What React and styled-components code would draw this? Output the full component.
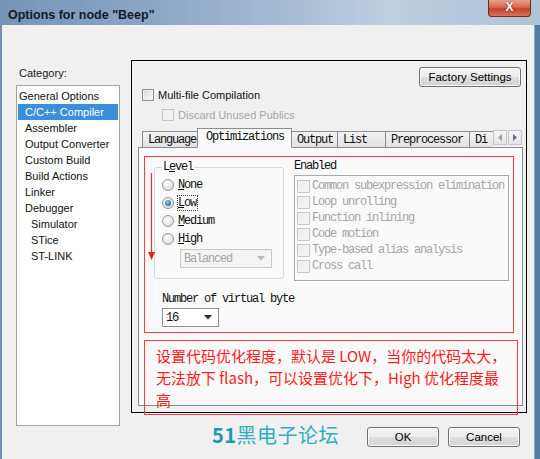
import React from 'react';
import styled, { createGlobalStyle, css } from 'styled-components';

const UI = `"Liberation Sans", Arial, sans-serif`;
const MONO = `"Liberation Mono", "Courier New", monospace`;
const CJK = `"Noto Sans CJK SC", "Noto Sans", sans-serif`;

const GlobalStyle = createGlobalStyle`
  html, body {
    margin: 0;
    padding: 0;
    background: #f0f0f0;
  }
  body {
    font-family: ${UI};
  }
`;

const Window = styled.div`
  width: 540px;
  height: 459px;
  display: flex;
  flex-direction: column;
  overflow: hidden;
  background: #f0f0f0;
`;

const TitleBar = styled.div`
  height: 25px;
  flex: none;
  display: flex;
  justify-content: space-between;
  align-items: flex-start;
  background: linear-gradient(90deg, #7794b7 0%, #8ba6c5 28%, #a5bbd4 52%, #bfcfe0 72%, #aec2d8 100%);
`;

const Title = styled.div`
  font: bold 12.5px ${UI};
  line-height: 14px;
  color: #111a26;
  padding: 8px 0 0 8px;
`;

const CloseButton = styled.div`
  width: 43px;
  height: 17px;
  margin-right: 9px;
  box-sizing: border-box;
  border: 1px solid #6e2b20;
  border-top: none;
  border-radius: 0 0 4px 4px;
  background: linear-gradient(#e9a08c 0%, #d66a50 45%, #c2412a 55%, #d8735a 100%);
  color: #fff;
  font: bold 12px ${UI};
  line-height: 15px;
  text-align: center;
  text-shadow: 0 0 2px #5a1a10;
`;

const Body = styled.div`
  flex: 1;
  display: flex;
  border-left: 2px solid #7090b3;
  border-right: 5px solid #4f7da6;
  box-shadow: inset -1px 0 0 #9aa8b5;
  padding: 0 8px 0 14px;
`;

const LeftCol = styled.div`
  width: 104px;
  flex: none;
  display: flex;
  flex-direction: column;
`;

const CategoryLabel = styled.div`
  margin-top: 41px;
  padding-left: 3px;
  font-size: 11px;
  line-height: 14px;
  color: #1a1a1a;
`;

const CategoryList = styled.div`
  margin-top: 5px;
  height: 341px;
  box-sizing: border-box;
  border: 1px solid #a3a3a3;
  background: #fff;
  padding-top: 2px;
`;

const CategoryItem = styled.div`
  height: 16px;
  line-height: 16px;
  margin: 0 1px;
  font-size: 11px;
  color: #111;
  white-space: nowrap;
  padding-left: ${p => 1 + p.level * 6}px;
  ${p => p.selected && css`
    background: #3b8edb;
    color: #fff;
  `}
`;

const RightCol = styled.div`
  margin-left: 11px;
  width: 396px;
  flex: none;
  display: flex;
  flex-direction: column;
  padding-top: 35px;
`;

const Panel = styled.div`
  height: 353px;
  box-sizing: border-box;
  border: 1px solid #000;
  display: flex;
  flex-direction: column;
  padding: 6px 3px 6px 6px;
`;

const FactoryRow = styled.div`
  display: flex;
  justify-content: flex-end;
  padding-right: 2px;
`;

const Button = styled.div`
  width: ${p => p.width}px;
  height: 20px;
  box-sizing: border-box;
  border: 1px solid #707070;
  border-radius: 3px;
  background: linear-gradient(#f4f4f4 0%, #ececec 50%, #dfdfdf 50%, #d2d2d2 100%);
  box-shadow: inset 0 0 0 1px #fbfbfb;
  font: 11.5px ${UI};
  line-height: 18px;
  text-align: center;
  color: #000;
`;

const CheckRow = styled.div`
  display: flex;
  align-items: center;
  gap: 4px;
  height: 13px;
  margin: ${p => p.top}px 0 0 ${p => p.left}px;
  font-size: 11px;
  color: ${p => (p.disabled ? '#a7a7a7' : '#111')};
`;

const Checkbox = styled.span`
  width: ${p => p.size || 12}px;
  height: ${p => p.size || 12}px;
  flex: none;
  box-sizing: border-box;
  border: 1px solid ${p => (p.disabled ? '#c6c6c6' : '#8e8f8f')};
  background: ${p => (p.disabled
    ? 'linear-gradient(135deg, #ececec, #f7f7f7)'
    : 'linear-gradient(135deg, #d6d6d6, #fdfdfd)')};
  box-shadow: inset 0 0 0 1px ${p => (p.disabled ? '#f4f4f4' : '#f0f0f0')};
`;

const TabStrip = styled.div`
  margin-top: 7px;
  height: 19px;
  display: flex;
  align-items: flex-end;
  padding-left: 4px;
`;

const TabScroller = styled.div`
  flex: 1;
  display: flex;
  align-items: flex-end;
  height: 20px;
  overflow: hidden;
  margin-bottom: -1px;
  position: relative;
  z-index: 1;
`;

const Tab = styled.div`
  flex: none;
  width: ${p => p.width}px;
  height: 17px;
  box-sizing: border-box;
  border: 1px solid #898c95;
  border-bottom: 1px solid #898c95;
  margin-right: -1px;
  padding-left: 5px;
  background: linear-gradient(#f3f3f3, #e2e2e2);
  font: 12px ${MONO};
  letter-spacing: -1.2px;
  line-height: 16px;
  color: #111;
  white-space: nowrap;
  ${p => p.active && css`
    height: 20px;
    padding-left: 8px;
    line-height: 17px;
    background: #fafafa;
    border-bottom-color: #fafafa;
    position: relative;
    z-index: 1;
  `}
`;

const ScrollArrows = styled.div`
  display: flex;
  gap: 1px;
  margin: 0 1px 2px 0;
`;

const ScrollArrow = styled.div`
  width: 14px;
  height: 15px;
  box-sizing: border-box;
  border: 1px solid #c4c4c4;
  background: linear-gradient(#f6f6f6, #e4e4e4);
  display: flex;
  align-items: center;
  justify-content: center;
`;

const TabBody = styled.div`
  flex: 1;
  box-sizing: border-box;
  border: 1px solid #898c95;
  background: #fafafa;
  min-height: 0;
`;

const RedBox = styled.div`
  box-sizing: border-box;
  border: 1px solid #ff3b3b;
  margin: ${p => p.top}px 0 0 5px;
  width: ${p => p.width}px;
  height: ${p => p.height}px;
  position: relative;
`;

const RedArrow = styled.svg`
  position: absolute;
  left: 3px;
  top: 16px;
`;

const OptionsRow = styled.div`
  display: flex;
  align-items: flex-start;
`;

const LevelGroup = styled.fieldset`
  margin: 4px 0 0 9px;
  width: 130px;
  box-sizing: border-box;
  border: 1px solid #d3dbe1;
  border-radius: 3px;
  padding: 0 0 10px 7px;
  min-width: 0;
`;

const Legend = styled.legend`
  padding: 0 1px;
  font: 12px ${MONO};
  letter-spacing: -1.2px;
  line-height: 12px;
  color: #111;
`;

const MonoText = styled.span`
  font: 12px ${MONO};
  letter-spacing: -1.2px;
  color: ${p => (p.disabled ? '#a5a5a5' : '#111')};
  white-space: nowrap;
  ${p => p.focused && css`
    outline: 1px dotted #333;
    outline-offset: 0;
    padding-right: 1px;
  `}
`;

const RadioRow = styled.div`
  height: 18px;
  display: flex;
  align-items: center;
  gap: 4px;
  &:first-of-type {
    margin-top: 3px;
  }
`;

const Radio = styled.span`
  width: 12px;
  height: 12px;
  flex: none;
  box-sizing: border-box;
  border-radius: 50%;
  border: 1px solid #979797;
  background: radial-gradient(circle at 40% 35%, #ffffff, #d4d4d4);
  position: relative;
  ${p => p.checked && css`
    &::after {
      content: '';
      position: absolute;
      inset: 2px;
      border-radius: 50%;
      background: radial-gradient(circle at 40% 35%, #8ad6ec, #1c6b8c 75%);
    }
  `}
`;

const Select = styled.div`
  width: ${p => p.width}px;
  height: 19px;
  box-sizing: border-box;
  border: 1px solid ${p => (p.disabled ? '#c9c9c9' : '#8e8f8f')};
  background: ${p => (p.disabled ? '#f4f4f4' : '#fff')};
  display: flex;
  align-items: center;
  justify-content: space-between;
  padding: 0 6px 0 3px;
  margin: ${p => p.top}px 0 0 ${p => p.left}px;
`;

const EnabledCol = styled.div`
  margin-left: 10px;
  display: flex;
  flex-direction: column;
`;

const EnabledLabel = styled.div`
  margin-top: 2px;
  line-height: 14px;
  font: 12px ${MONO};
  letter-spacing: -1.2px;
  color: #111;
`;

const EnabledList = styled.div`
  margin-top: 2px;
  width: 215px;
  height: 106px;
  box-sizing: border-box;
  border: 1px solid #a8a8a8;
  padding: 2px 0 0 2px;
`;

const EnabledRow = styled.div`
  height: 16px;
  display: flex;
  align-items: center;
  gap: 2px;
`;

const NumberLabel = styled.div`
  margin: 11px 0 0 17px;
  line-height: 14px;
  font: 12px ${MONO};
  letter-spacing: -1.2px;
  color: #111;
`;

const Note = styled.div`
  padding: 4px 0 0 11px;
  font: 15px ${CJK};
  line-height: 22px;
  color: #ff1a1a;
  white-space: nowrap;
`;

const Footer = styled.div`
  margin-top: 14px;
  height: 20px;
  display: flex;
  align-items: center;
  padding: 0 7px 0 84px;
`;

const Brand = styled.div`
  font: 20px ${CJK};
  line-height: 22px;
  color: #2eaebf;
  margin: 0 0 4px -3px;
  letter-spacing: 0.5px;
  white-space: nowrap;
  b {
    color: #1a9aab;
    font-weight: bold;
  }
`;

const ButtonGroup = styled.div`
  margin-left: auto;
  display: flex;
  gap: 9px;
`;

const U = styled.span`
  text-decoration: underline;
`;

const categories = [
  { name: 'General Options', level: 0 },
  { name: 'C/C++ Compiler', level: 1, selected: true },
  { name: 'Assembler', level: 1 },
  { name: 'Output Converter', level: 1 },
  { name: 'Custom Build', level: 1 },
  { name: 'Build Actions', level: 1 },
  { name: 'Linker', level: 1 },
  { name: 'Debugger', level: 1 },
  { name: 'Simulator', level: 2 },
  { name: 'STice', level: 2 },
  { name: 'ST-LINK', level: 2 },
];

// the last tab is cut by the scroll arrows, only "Di" shows
const tabs = [
  { name: 'Language', width: 56 },
  { name: 'Optimizations', width: 95, active: true },
  { name: 'Output', width: 47 },
  { name: 'List', width: 49 },
  { name: 'Preprocessor', width: 85 },
  { name: 'Di', width: 40 },
];

const levels = [
  { first: 'N', rest: 'one' },
  { first: 'L', rest: 'ow', checked: true },
  { first: 'M', rest: 'edium' },
  { first: 'H', rest: 'igh' },
];

const optimizations = [
  'Common subexpression elimination',
  'Loop unrolling',
  'Function inlining',
  'Code motion',
  'Type-based alias analysis',
  'Cross call',
];

const DropArrow = ({ color }) => (
  <svg width="8" height="5" viewBox="0 0 8 5">
    <path d="M0 0 L8 0 L4 4.5 Z" fill={color} />
  </svg>
);

const App = () => (
  <>
    <GlobalStyle />
    <Window>
      <TitleBar>
        <Title>Options for node "Beep"</Title>
        <CloseButton>X</CloseButton>
      </TitleBar>
      <Body>
        <LeftCol>
          <CategoryLabel>Category:</CategoryLabel>
          <CategoryList>
            {categories.map(c => (
              <CategoryItem key={c.name} level={c.level} selected={c.selected}>
                {c.name}
              </CategoryItem>
            ))}
          </CategoryList>
        </LeftCol>

        <RightCol>
          <Panel>
            <FactoryRow>
              <Button width={102}>Factory Settings</Button>
            </FactoryRow>
            <CheckRow top={1} left={4}>
              <Checkbox />
              Multi-file Compilation
            </CheckRow>
            <CheckRow top={7} left={24} disabled>
              <Checkbox disabled />
              Discard Unused Publics
            </CheckRow>

            <TabStrip>
              <TabScroller>
                {tabs.map(t => (
                  <Tab key={t.name} width={t.width} active={t.active}>{t.name}</Tab>
                ))}
              </TabScroller>
              <ScrollArrows>
                <ScrollArrow>
                  <svg width="4" height="7" viewBox="0 0 4 7"><path d="M4 0 L0 3.5 L4 7 Z" fill="#9aa3b4" /></svg>
                </ScrollArrow>
                <ScrollArrow>
                  <svg width="4" height="7" viewBox="0 0 4 7"><path d="M0 0 L4 3.5 L0 7 Z" fill="#5d6f96" /></svg>
                </ScrollArrow>
              </ScrollArrows>
            </TabStrip>

            <TabBody>
              <RedBox top={8} width={370} height={177}>
                <RedArrow width="7" height="87" viewBox="0 0 7 87">
                  <line x1="3.5" y1="0" x2="3.5" y2="80" stroke="#ff2a2a" strokeWidth="1.2" />
                  <path d="M0 79 L7 79 L3.5 87 Z" fill="#ff1a1a" />
                </RedArrow>
                <OptionsRow>
                  <LevelGroup>
                    <Legend>L<U>e</U>vel</Legend>
                    {levels.map(l => (
                      <RadioRow key={l.first}>
                        <Radio checked={l.checked} />
                        <MonoText focused={l.checked}><U>{l.first}</U>{l.rest}</MonoText>
                      </RadioRow>
                    ))}
                    <Select width={92} top={1} left={18} disabled>
                      <MonoText disabled>Balanced</MonoText>
                      <DropArrow color="#b8b8b8" />
                    </Select>
                  </LevelGroup>
                  <EnabledCol>
                    <EnabledLabel>Enabled</EnabledLabel>
                    <EnabledList>
                      {optimizations.map(o => (
                        <EnabledRow key={o}>
                          <Checkbox size={13} disabled />
                          <MonoText disabled>{o}</MonoText>
                        </EnabledRow>
                      ))}
                    </EnabledList>
                  </EnabledCol>
                </OptionsRow>
                <NumberLabel>Number of virtual byte</NumberLabel>
                <Select width={57} top={2} left={17}>
                  <MonoText>16</MonoText>
                  <DropArrow color="#1b2a57" />
                </Select>
              </RedBox>

              <RedBox top={7} width={374} height={75}>
                <Note>
                  设置代码优化程度，默认是 LOW，当你的代码太大，<br />
                  无法放下 flash，可以设置优化下，High 优化程度最<br />
                  高
                </Note>
              </RedBox>
            </TabBody>
          </Panel>

          <Footer>
            <Brand><b>51</b>黑电子论坛</Brand>
            <ButtonGroup>
              <Button width={72}>OK</Button>
              <Button width={72}>Cancel</Button>
            </ButtonGroup>
          </Footer>
        </RightCol>
      </Body>
    </Window>
  </>
);

export default App;
